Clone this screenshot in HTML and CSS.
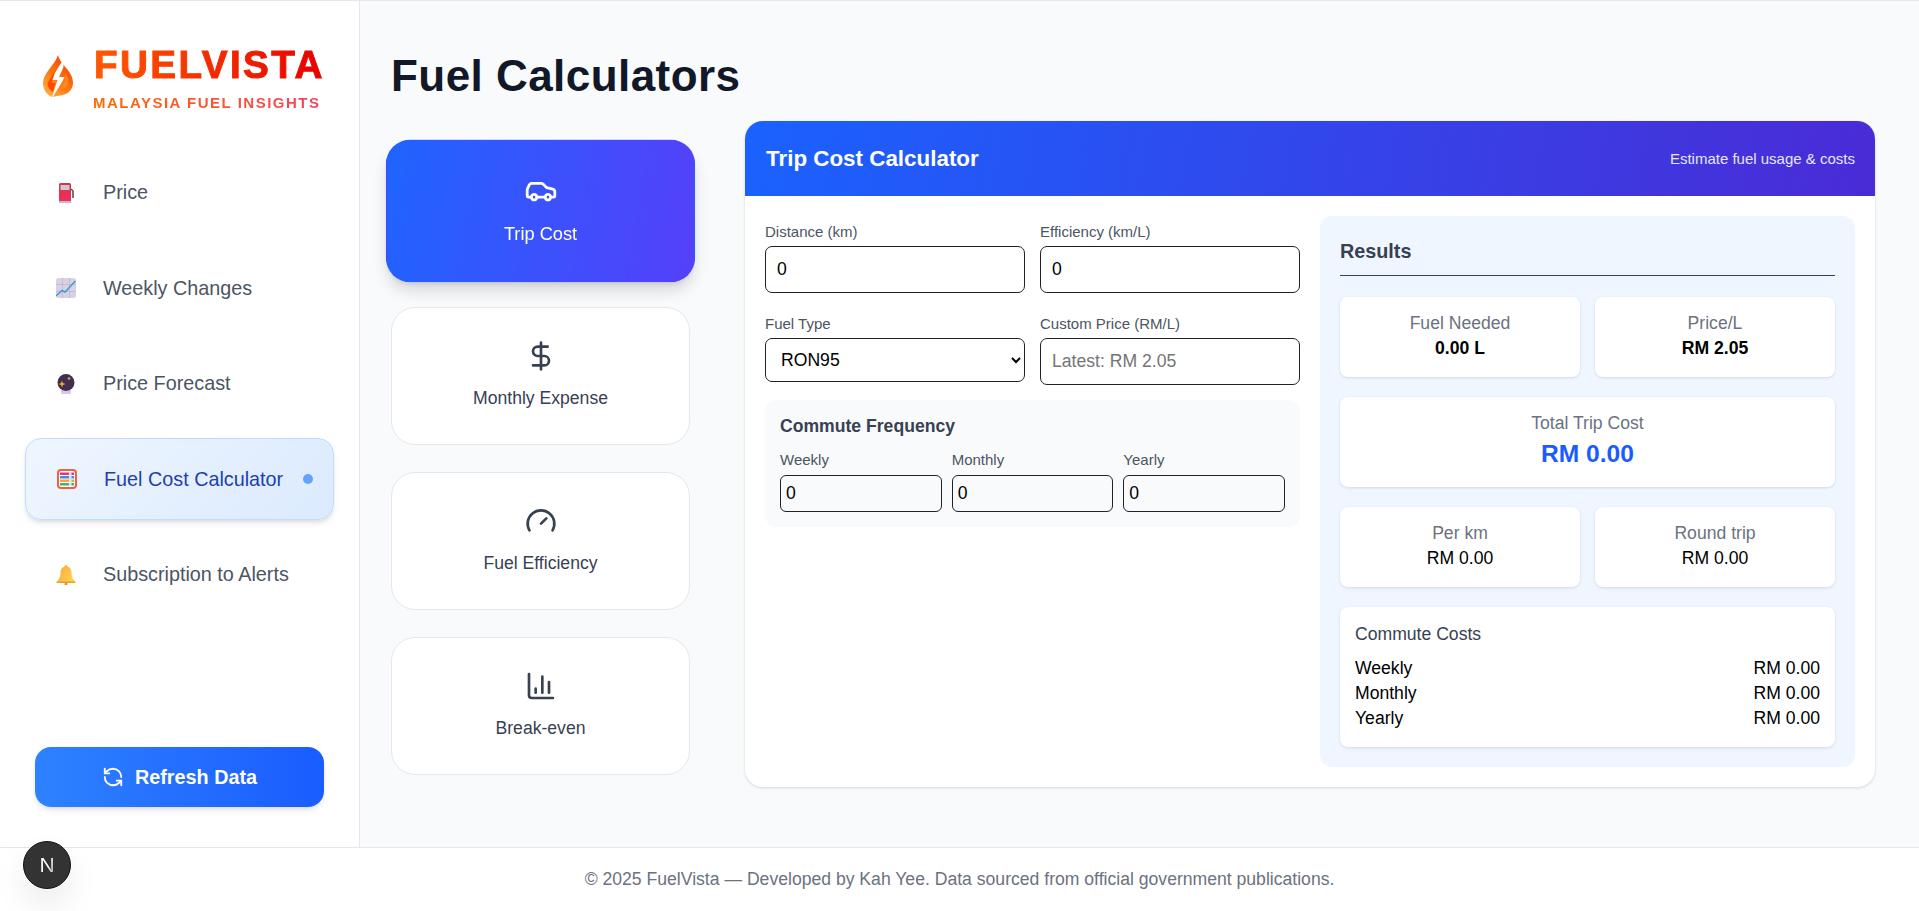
FILE: index.html
```html
<!DOCTYPE html>
<html lang="en">
    <head>
        <meta charset="UTF-8">
        <meta name="viewport" content="width=device-width, initial-scale=1.0">
        <title>FuelVista</title>
        <link rel="stylesheet" href="styles.css">
    </head>
    <body>
        <div class="layout">
            <aside class="sidebar">
                <div class="brand">
                    <svg class="flame" viewBox="0 0 30 45">
                        <defs>
                            <linearGradient id="flameGrad" x1="0.8" y1="0" x2="0.1" y2="1">
                                <stop offset="0" stop-color="#f23c00"/>
                                <stop offset="0.55" stop-color="#ff7a10"/>
                                <stop offset="1" stop-color="#ffb347"/>
                            </linearGradient>
                            <linearGradient id="flameGradDark" x1="0" y1="0" x2="1" y2="1">
                                <stop offset="0" stop-color="#ff5a00"/>
                                <stop offset="1" stop-color="#ffa030"/>
                            </linearGradient>
                        </defs>
                        <path d="M15 0C16 5 20 9 24 14C28 19 30 23 30 28C30 35 24 40 17 40.500L9 42C4 40 0 35 0 28C0 18 12 10 15 0Z" fill="url(#flameGrad)"/>
                        <path d="M20 5L7.500 25H14.500L8 45L22 22H16L20.500 12Z" fill="#fff"/>
                        <path d="M13 14L4.500 28C4.500 32 6.500 35 10 37L12.500 28H8.500Z" fill="#ff4a00"/>
                        <path d="M23 18L16.500 35C21 34 25 31 25 26C25 23 24 20 23 18Z" fill="url(#flameGradDark)"/>
                    </svg>
                    <div class="brand-text">
                        <div class="brand-name">FUELVISTA</div>
                        <div class="brand-sub">MALAYSIA FUEL INSIGHTS</div>
                    </div>
                </div>

                <nav class="nav">
                    <a class="nav-item">
                        <svg class="nav-icon" viewBox="0 0 20 20">
                            <defs>
                                <linearGradient id="pumpGrad" x1="0" y1="0" x2="0" y2="1">
                                    <stop offset="0" stop-color="#d8324a"/>
                                    <stop offset="1" stop-color="#f0305a"/>
                                </linearGradient>
                            </defs>
                            <rect x="3" y="0" width="12" height="19" rx="1.500" fill="url(#pumpGrad)"/>
                            <rect x="4.500" y="2" width="9" height="5" rx="0.500" fill="#cfc6d6"/>
                            <rect x="3" y="18" width="12" height="2" fill="#c9b8d0"/>
                            <path d="M15 6L17 8V15" stroke="#57525c" stroke-width="1.600" fill="none"/>
                        </svg>
                        <span>Price</span>
                    </a>
                    <a class="nav-item">
                        <svg class="nav-icon" viewBox="0 0 20 20">
                            <rect x="0" y="0" width="20" height="20" rx="2.500" fill="#d9d2e4"/>
                            <path d="M6.500 0V20M13.500 0V20M0 6.500H20M0 13.500H20" stroke="#bfb6cc" stroke-width="0.800"/>
                            <path d="M0 18L6 12.500L9 14L19.500 3" stroke="#3f9ad8" stroke-width="1.500" fill="none"/>
                        </svg>
                        <span>Weekly Changes</span>
                    </a>
                    <a class="nav-item">
                        <svg class="nav-icon" viewBox="0 0 20 20">
                            <rect x="5" y="15" width="10" height="5" rx="1.500" fill="#d8c4ee"/>
                            <circle cx="10" cy="8.500" r="8.500" fill="#40304f"/>
                            <path d="M6 6.500L6.900 9.100L9.500 10L6.900 10.900L6 13.500L5.100 10.900L2.500 10L5.100 9.100Z" fill="#f7a63c"/>
                            <circle cx="13" cy="4.500" r="1.300" fill="#e8a33c"/>
                        </svg>
                        <span>Price Forecast</span>
                    </a>
                    <a class="nav-item active">
                        <svg class="nav-icon" viewBox="0 0 20 20">
                            <rect x="1" y="1" width="18" height="18" rx="3" fill="#fff" stroke="#f2603c" stroke-width="2"/>
                            <rect x="3" y="3.500" width="14" height="2.500" fill="#d6368c"/>
                            <rect x="3" y="7" width="14" height="2.500" fill="#3f8fe0"/>
                            <rect x="3" y="10.500" width="14" height="2.500" fill="#f7a63c"/>
                            <rect x="3" y="14" width="14" height="2.500" fill="#46b36e"/>
                            <rect x="12" y="3" width="2.500" height="14" fill="#e4e4ea"/>
                        </svg>
                        <span>Fuel Cost Calculator</span>
                        <i class="nav-dot"></i>
                    </a>
                    <a class="nav-item">
                        <svg class="nav-icon" viewBox="0 0 20 20">
                            <defs>
                                <linearGradient id="bellGrad" x1="0" y1="0" x2="1" y2="0.600">
                                    <stop offset="0" stop-color="#f7a33a"/>
                                    <stop offset="1" stop-color="#ffd24d"/>
                                </linearGradient>
                            </defs>
                            <path d="M10 0C11 0 11.500 0.800 11.500 1.600C14.500 2.500 15.500 5 15.500 8C15.500 12 17 14.500 19.500 17H0.500C3 14.500 4.500 12 4.500 8C4.500 5 5.500 2.500 8.500 1.600C8.500 0.800 9 0 10 0Z" fill="url(#bellGrad)"/>
                            <rect x="0.500" y="16.500" width="19" height="1.500" rx="0.700" fill="#f09a30"/>
                            <circle cx="10" cy="19" r="1.500" fill="#e88a28"/>
                        </svg>
                        <span>Subscription to Alerts</span>
                    </a>
                </nav>

                <button class="refresh-btn">
                    <svg class="refresh-icon" viewBox="0 0 24 24">
                        <path d="M21 12a9 9 0 0 0-9-9 9.750 9.750 0 0 0-6.740 2.740L3 8"/>
                        <path d="M3 3v5h5"/>
                        <path d="M3 12a9 9 0 0 0 9 9 9.750 9.750 0 0 0 6.740-2.740L21 16"/>
                        <path d="M16 16h5v5"/>
                    </svg>
                    Refresh Data
                </button>
            </aside>

            <main class="main">
                <h1 class="page-title">Fuel Calculators</h1>
                <div class="calc-row">
                    <div class="tabs">
                        <button class="tab active">
                            <svg class="tab-icon" viewBox="0 0 24 24">
                                <path d="M19 17h2c.6 0 1-.4 1-1v-3c0-.9-.7-1.700-1.500-1.900C18.700 10.600 16 10 16 10s-1.300-1.400-2.200-2.300c-.5-.4-1.100-.7-1.800-.7H5c-.6 0-1.100.4-1.400.9l-1.400 2.900A3.700 3.700 0 0 0 2 12v4c0 .6.4 1 1 1h2"/>
                                <circle cx="7" cy="17" r="2"/>
                                <path d="M9 17h6"/>
                                <circle cx="17" cy="17" r="2"/>
                            </svg>
                            <span>Trip Cost</span>
                        </button>
                        <button class="tab">
                            <svg class="tab-icon" viewBox="0 0 24 24">
                                <line x1="12" y1="2" x2="12" y2="22"/>
                                <path d="M17 5H9.500a3.500 3.500 0 0 0 0 7h5a3.500 3.500 0 0 1 0 7H6"/>
                            </svg>
                            <span>Monthly Expense</span>
                        </button>
                        <button class="tab">
                            <svg class="tab-icon" viewBox="0 0 24 24">
                                <path d="m12 14 4-4"/>
                                <path d="M3.340 19a10 10 0 1 1 17.320 0"/>
                            </svg>
                            <span>Fuel Efficiency</span>
                        </button>
                        <button class="tab">
                            <svg class="tab-icon" viewBox="0 0 24 24">
                                <path d="M3 3v16a2 2 0 0 0 2 2h16"/>
                                <path d="M18 17V9"/>
                                <path d="M13 17V5"/>
                                <path d="M8 17v-3"/>
                            </svg>
                            <span>Break-even</span>
                        </button>
                    </div>

                    <section class="panel">
                        <header class="panel-head">
                            <h2>Trip Cost Calculator</h2>
                            <span>Estimate fuel usage &amp; costs</span>
                        </header>
                        <div class="panel-body">
                            <div class="form-col">
                                <div class="form-grid">
                                    <div class="field">
                                        <label>Distance (km)</label>
                                        <input type="number" value="0">
                                    </div>
                                    <div class="field">
                                        <label>Efficiency (km/L)</label>
                                        <input type="number" value="0">
                                    </div>
                                    <div class="field">
                                        <label>Fuel Type</label>
                                        <select>
                                            <option>RON95</option>
                                            <option>RON97</option>
                                            <option>Diesel</option>
                                        </select>
                                    </div>
                                    <div class="field">
                                        <label>Custom Price (RM/L)</label>
                                        <input type="number" placeholder="Latest: RM 2.05">
                                    </div>
                                </div>
                                <div class="commute">
                                    <h3>Commute Frequency</h3>
                                    <div class="commute-grid">
                                        <div class="field">
                                            <label>Weekly</label>
                                            <input type="number" value="0">
                                        </div>
                                        <div class="field">
                                            <label>Monthly</label>
                                            <input type="number" value="0">
                                        </div>
                                        <div class="field">
                                            <label>Yearly</label>
                                            <input type="number" value="0">
                                        </div>
                                    </div>
                                </div>
                            </div>

                            <div class="results">
                                <h3>Results</h3>
                                <div class="result-grid">
                                    <div class="result-card">
                                        <div class="result-label">Fuel Needed</div>
                                        <div class="result-value bold">0.00 L</div>
                                    </div>
                                    <div class="result-card">
                                        <div class="result-label">Price/L</div>
                                        <div class="result-value bold">RM 2.05</div>
                                    </div>
                                    <div class="result-card wide total">
                                        <div class="result-label">Total Trip Cost</div>
                                        <div class="result-total">RM 0.00</div>
                                    </div>
                                    <div class="result-card">
                                        <div class="result-label">Per km</div>
                                        <div class="result-value">RM 0.00</div>
                                    </div>
                                    <div class="result-card">
                                        <div class="result-label">Round trip</div>
                                        <div class="result-value">RM 0.00</div>
                                    </div>
                                    <div class="result-card wide costs">
                                        <div class="costs-title">Commute Costs</div>
                                        <div class="costs-row"><span>Weekly</span><span>RM 0.00</span></div>
                                        <div class="costs-row"><span>Monthly</span><span>RM 0.00</span></div>
                                        <div class="costs-row"><span>Yearly</span><span>RM 0.00</span></div>
                                    </div>
                                </div>
                            </div>
                        </div>
                    </section>
                </div>
            </main>
        </div>

        <footer class="footer">© 2025 FuelVista — Developed by Kah Yee. Data sourced from official government publications.</footer>

        <div class="next-badge"><span>N</span></div>
    </body>
</html>
```

FILE: styles.css
```css
* {
    box-sizing: border-box;
}

body {
    margin: 0;
    height: 911px;
    overflow: hidden;
    font-family: "Liberation Sans", Arial, sans-serif;
    font-size: 17.6px;
    background-color: #f9fafb;
    border-top: 1px solid #e5e7eb;
}

.layout {
    display: flex;
    height: 846px;
}

/* sidebar */
.sidebar {
    width: 360px;
    flex-shrink: 0;
    display: flex;
    flex-direction: column;
    background-color: #fff;
    border-right: 1px solid #e5e7eb;
}

.brand {
    display: flex;
    align-items: flex-start;
    gap: 20px;
    padding: 54px 0 0 43px;
    height: 151.5px;
}

.flame {
    width: 30px;
    height: 45px;
    flex-shrink: 0;
}

.brand-text {
    margin-top: -12px;
}

.brand-name {
    font-size: 38.7px;
    line-height: 44px;
    font-weight: 700;
    letter-spacing: 2.4px;
    margin-left: 1px;
    background: linear-gradient(90deg, #ff5a00, #e60000);
    -webkit-background-clip: text;
    background-clip: text;
    color: transparent;
    -webkit-text-stroke: 1px transparent;
    white-space: nowrap;
}

.brand-sub {
    font-size: 15px;
    line-height: 18px;
    margin-top: 7px;
    font-weight: 700;
    letter-spacing: 1.5px;
    background: linear-gradient(90deg, #ff6a00, #f43f5e);
    -webkit-background-clip: text;
    background-clip: text;
    color: transparent;
    white-space: nowrap;
}

.nav {
    display: flex;
    flex-direction: column;
    gap: 15.5px;
    padding: 0 28px;
}

.nav-item {
    display: flex;
    align-items: center;
    height: 80px;
    padding-left: 27px;
    font-size: 19.8px;
    color: #4b5563;
    border-radius: 16px;
    border: 1px solid transparent;
}

.nav-icon {
    width: 20px;
    height: 20px;
    margin-right: 27px;
    flex-shrink: 0;
}

.nav-item.active {
    height: 82px;
    margin: -1px -3px;
    padding-left: 31px;
    color: #1e40af;
    background: linear-gradient(135deg, #eff6ff, #dbeafe);
    border-color: #bfdbfe;
    box-shadow: 0 4px 6px -1px rgba(0, 0, 0, 0.1), 0 2px 4px -2px rgba(0, 0, 0, 0.1);
}

.nav-dot {
    width: 10px;
    height: 10px;
    margin-left: auto;
    margin-right: 20px;
    border-radius: 50%;
    background-color: #60a5fa;
}

.refresh-btn {
    display: flex;
    align-items: center;
    justify-content: center;
    gap: 11px;
    width: 289px;
    height: 60px;
    margin: auto 0 40px 35px;
    font-family: inherit;
    font-size: 19.8px;
    font-weight: 700;
    color: #fff;
    border: none;
    border-radius: 16px;
    background: linear-gradient(90deg, #2e82ff, #1a5cff);
    box-shadow: 0 4px 6px -1px rgba(0, 0, 0, 0.1), 0 2px 4px -2px rgba(0, 0, 0, 0.1);
}

.refresh-icon {
    width: 22px;
    height: 22px;
    fill: none;
    stroke: #fff;
    stroke-width: 2;
    stroke-linecap: round;
    stroke-linejoin: round;
}

/* main area */
.main {
    flex: 1;
    min-width: 0;
    padding: 0 44px 0 31px;
}

.page-title {
    margin: 0;
    height: 120px;
    padding-top: 50px;
    font-size: 44px;
    line-height: 50px;
    font-weight: 700;
    letter-spacing: 0.45px;
    color: #111827;
}

.calc-row {
    display: flex;
    gap: 55px;
}

.tabs {
    width: 299px;
    flex-shrink: 0;
    display: flex;
    flex-direction: column;
    gap: 27px;
    padding-top: 21px;
}

.tab {
    display: flex;
    flex-direction: column;
    align-items: center;
    justify-content: center;
    gap: 16px;
    height: 138px;
    padding: 0 0 3px;
    font-family: inherit;
    font-size: 17.6px;
    color: #374151;
    background-color: #fff;
    border: 1px solid #e5e7eb;
    border-radius: 24px;
}

.tab.active {
    color: #fff;
    background: linear-gradient(100deg, #1f64ff, #5540fa);
    border-color: transparent;
    box-shadow: 0 10px 15px -3px rgba(0, 0, 0, 0.15), 0 4px 6px -4px rgba(0, 0, 0, 0.1);
    transform: scale(1.035);
}

.tab-icon {
    width: 32px;
    height: 32px;
    fill: none;
    stroke: currentColor;
    stroke-width: 2;
    stroke-linecap: round;
    stroke-linejoin: round;
}

.panel {
    flex: 1;
    min-width: 0;
    height: 666px;
    background-color: #fff;
    border-radius: 18px;
    box-shadow: 0 1px 3px rgba(0, 0, 0, 0.15);
    overflow: hidden;
}

.panel-head {
    display: flex;
    align-items: center;
    justify-content: space-between;
    height: 75px;
    padding: 0 20px 0 21px;
    color: #fff;
    background: linear-gradient(100deg, #1a62ff, #4a2bd6);
}

.panel-head h2 {
    margin: 0;
    font-size: 22.4px;
    font-weight: 700;
}

.panel-head span {
    font-size: 15px;
    color: #e5e7f9;
}

.panel-body {
    display: grid;
    grid-template-columns: 1fr 1fr;
    gap: 20px;
    padding: 20px;
}

.form-grid {
    display: grid;
    grid-template-columns: 1fr 1fr;
    gap: 15px;
    margin-bottom: 15px;
}

.field {
    display: flex;
    flex-direction: column;
}

.field label {
    font-size: 15px;
    line-height: 28px;
    padding-top: 2px;
    color: #4b5563;
}

.field input,
.field select {
    width: 100%;
    height: 47px;
    padding: 0 11px;
    font-family: inherit;
    font-size: 17.6px;
    color: #000;
    background-color: #fff;
    border: 1px solid #1f2328;
    border-radius: 7px;
}

.field select {
    height: 44px;
    padding: 0 0 0 11px;
}

.commute {
    padding: 15px;
    background-color: #f9fafb;
    border-radius: 12px;
}

.commute h3 {
    margin: 0;
    font-size: 17.6px;
    line-height: 22px;
    font-weight: 700;
    color: #374151;
}

.commute-grid {
    display: grid;
    grid-template-columns: 1fr 1fr 1fr;
    gap: 10px;
    margin-top: 13px;
}

.commute-grid .field label {
    line-height: 20px;
    padding-top: 0;
    margin-bottom: 5px;
}

.commute-grid .field input {
    height: 37px;
    padding: 0 5px;
    background-color: #f9fafb;
    border-radius: 6px;
}

.results {
    height: 551px;
    padding: 20px;
    background-color: #eff6ff;
    border-radius: 12px;
}

.results h3 {
    margin: 0 0 21px;
    height: 40px;
    font-size: 19.8px;
    line-height: 30px;
    font-weight: 700;
    color: #374151;
    border-bottom: 1px solid #374151;
}

.result-grid {
    display: grid;
    grid-template-columns: 1fr 1fr;
    gap: 20px 15px;
}

.result-card {
    height: 80px;
    padding-top: 14px;
    text-align: center;
    background-color: #fff;
    border-radius: 8px;
    box-shadow: 0 1px 3px rgba(0, 0, 0, 0.12);
}

.result-card.wide {
    grid-column: span 2;
}

.result-label {
    line-height: 25px;
    color: #6b7280;
}

.result-value {
    line-height: 25px;
    color: #000;
}

.result-value.bold {
    font-weight: 700;
}

.result-card.total {
    height: 90px;
    padding-top: 14px;
}

.result-total {
    margin-top: 1px;
    font-size: 24.6px;
    line-height: 34px;
    font-weight: 700;
    color: #1a5cff;
}

.result-card.costs {
    height: 140px;
    padding: 15px;
    text-align: left;
}

.costs-title {
    line-height: 24px;
    margin-bottom: 10px;
    color: #374151;
}

.costs-row {
    display: flex;
    justify-content: space-between;
    line-height: 25px;
    color: #000;
}

.footer {
    height: 64px;
    display: flex;
    align-items: center;
    justify-content: center;
    font-size: 17.6px;
    color: #6b7280;
    background-color: #fff;
    border-top: 1px solid #e5e7eb;
}

.next-badge {
    position: fixed;
    left: 23px;
    top: 841px;
    width: 48px;
    height: 48px;
    display: flex;
    align-items: center;
    justify-content: center;
    font-size: 21px;
    background-color: #333;
    border: 1px solid #111;
    border-radius: 50%;
    box-shadow: 0 0 0 1px rgba(255, 255, 255, 0.25), 0 16px 32px rgba(0, 0, 0, 0.08);
}

.next-badge span {
    background: linear-gradient(110deg, #fff 55%, #8a8a8a);
    -webkit-background-clip: text;
    background-clip: text;
    color: transparent;
}
```
